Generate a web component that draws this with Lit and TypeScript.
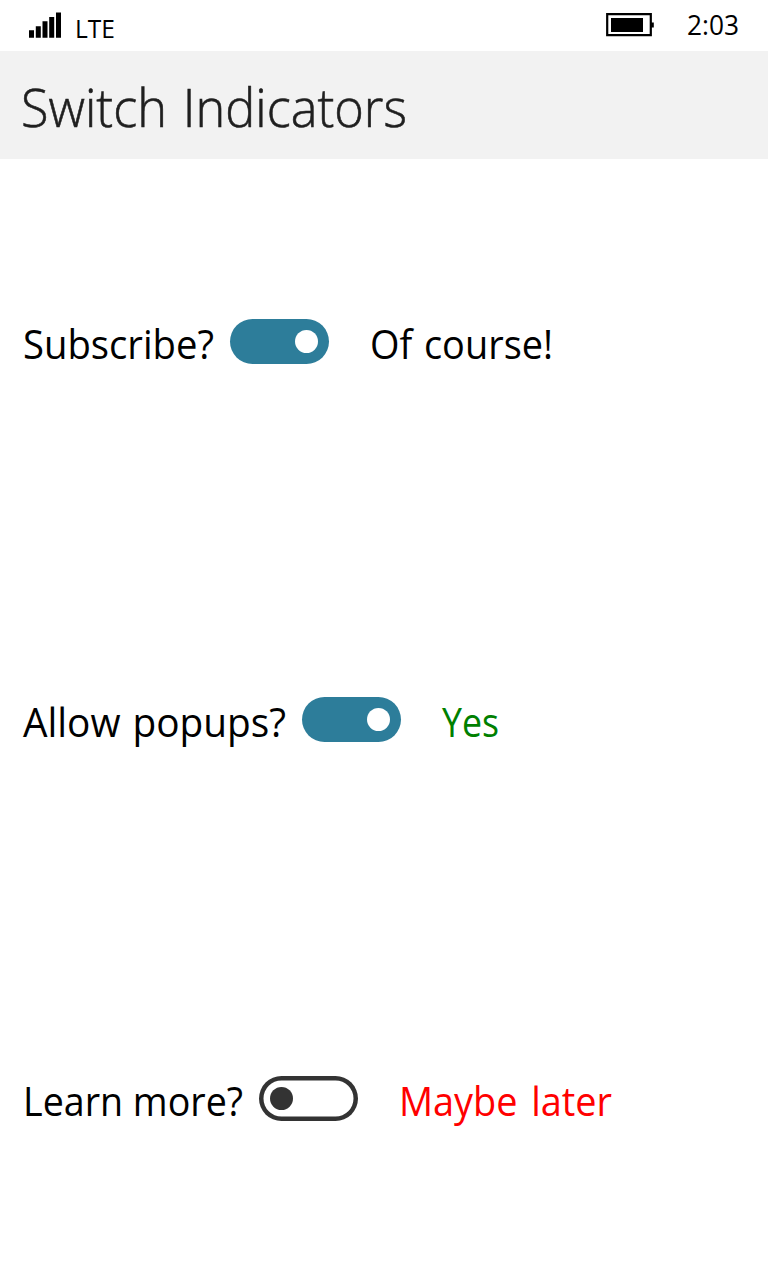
import { LitElement, html, css, svg } from "lit";
import { customElement, property } from "lit/decorators.js";

@customElement("fit-text")
class FitText extends LitElement {
  @property() text = "";
  @property({ type: Number }) width = 100;
  @property({ type: Number }) size = 40;
  @property({ type: Number }) weight = 400;
  @property({ type: Number }) gap = 0;
  @property({ type: Number }) outline = 0;
  static styles = css`
    :host { display: block; flex: none; }
    svg { display: block; overflow: visible; }
    text { font-family: "Open Sans", "Noto Sans", sans-serif; fill: currentColor; stroke: currentColor; white-space: pre; }
  `;
  render() {
    return html`<svg width=${this.width} height=${this.size * 1.4}>${svg`<text x="0" y=${this.size * 1.08} font-size=${this.size} font-weight=${this.weight} word-spacing=${this.gap} stroke-width=${this.outline} textLength=${this.width} lengthAdjust="spacingAndGlyphs">${this.text}</text>`}</svg>`;
  }
}

@customElement("toggle-switch")
class ToggleSwitch extends LitElement {
  @property({ type: Boolean, reflect: true }) on = false;
  static styles = css`
    :host { display: flex; flex: none; align-items: center; box-sizing: border-box; width: 99px; height: 45px; border-radius: 22.5px; padding: 0 11px; background: #fff; box-shadow: inset 0 0 0 4.5px #333; }
    :host([on]) { background: #2d7d9a; box-shadow: none; justify-content: flex-end; }
    .knob { width: 23px; height: 23px; border-radius: 50%; background: #333; }
    :host([on]) .knob { background: #fff; }
  `;
  render() { return html`<div class="knob"></div>`; }
}

@customElement("app-root")
class AppRoot extends LitElement {
  static styles = css`
    :host { display: flex; flex-direction: column; box-sizing: border-box; width: 768px; height: 1280px; background: #fff; color: #000; overflow: hidden; }
    .status { display: flex; height: 51px; flex: none; align-items: flex-start; box-sizing: border-box; padding: 0 29px; }
    .signal { margin: 12px 13px 0 0; }
    .battery { margin: 13px 33px 0 auto; }
    .lte { margin-top: 10px; }
    .time { margin-top: 5px; }
    .title { height: 108px; flex: none; background: #f2f2f2; color: #1f1f1f; padding: 18px 0 0 21px; box-sizing: border-box; }
    .row { display: flex; align-items: flex-start; flex: none; height: 378px; padding: 160px 0 0 23px; box-sizing: border-box; }
    .row + .row { height: 379px; }
    .row fit-text { margin-top: -3px; }
    toggle-switch { margin: 0 41px 0 16px; }
    .green { color: #008000; }
    .red { color: #f00; }
  `;
  render() {
    return html`
      <div class="status">
        <svg class="signal" width="33" height="27"><path d="M0 18.3h5v7.5H0zM6.8 14.2h5v11.6h-5zM13.5 9.3h5v16.5h-5zM20.2 5h5v20.8h-5zM27 .6h5v25.2h-5z"/></svg>
        <fit-text class="lte" text="LTE" width="40" size="26"></fit-text>
        <svg class="battery" width="48" height="24"><path d="M1.2 1.2h43.6v21H1.2z" fill="none" stroke="#000" stroke-width="2.2"/><path d="M5 5h32v14H5zM45 9.5h2.8v5H45z"/></svg>
        <fit-text class="time" text="2:03" width="52" size="28"></fit-text>
      </div>
      <div class="title"><fit-text text="Switch Indicators" width="386" size="53.5" weight="300" gap="3" outline="0.6"></fit-text></div>
      <div class="row"><fit-text text="Subscribe?" width="191" size="40"></fit-text><toggle-switch on></toggle-switch><fit-text text="Of course!" width="183" size="40" gap="2"></fit-text></div>
      <div class="row"><fit-text text="Allow popups?" width="263" size="40" gap="2"></fit-text><toggle-switch on></toggle-switch><fit-text class="green" text="Yes" width="57" size="40"></fit-text></div>
      <div class="row"><fit-text text="Learn more?" width="220" size="40"></fit-text><toggle-switch></toggle-switch><fit-text class="red" text="Maybe later" width="213" size="40" gap="4"></fit-text></div>
    `;
  }
}
